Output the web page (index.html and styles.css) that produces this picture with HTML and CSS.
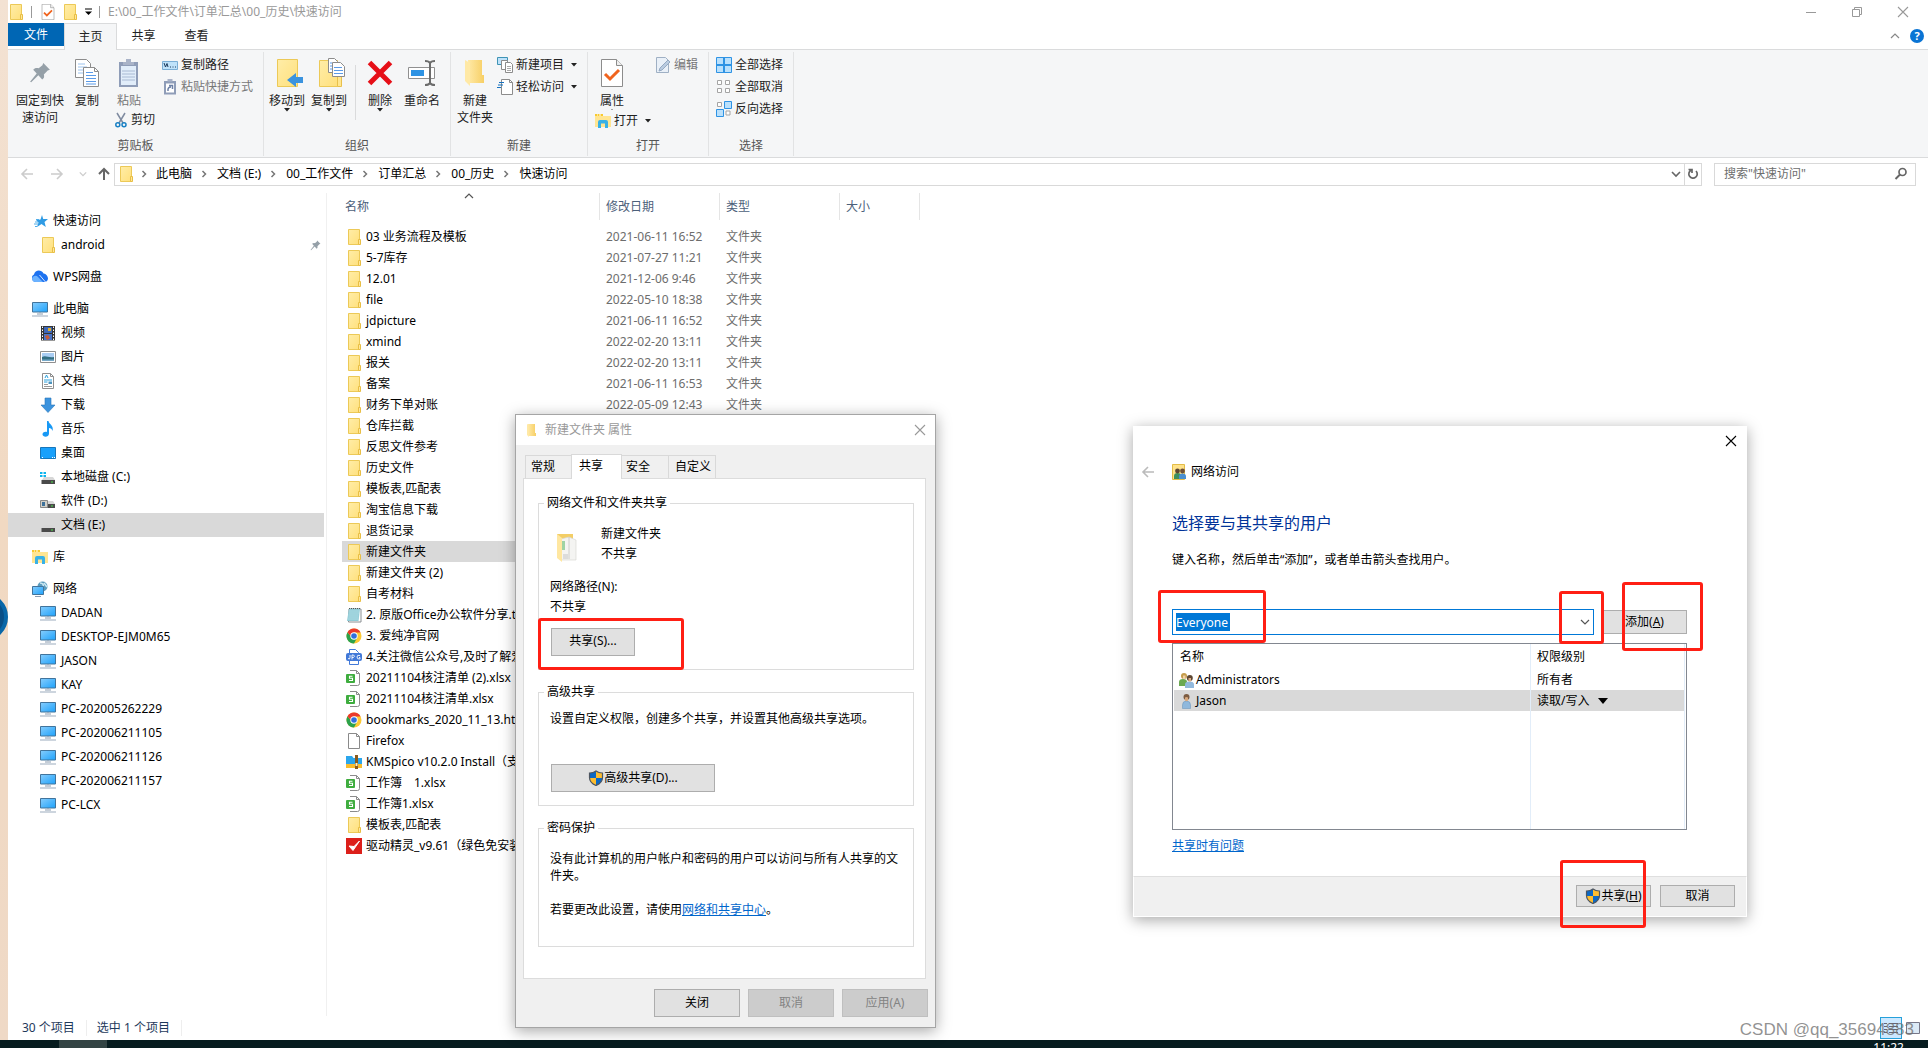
FILE: index.html
```html
<!DOCTYPE html>
<html lang="zh-CN">
<head>
<meta charset="utf-8">
<title>快速访问</title>
<link rel="stylesheet" href="styles.css">
</head>
<body>
<svg class="defs" aria-hidden="true">
  <defs>
    <linearGradient id="gf" x1="0" y1="0" x2="1" y2="1"><stop offset="0" stop-color="#ffeda8"/><stop offset="1" stop-color="#ffe07c"/></linearGradient>
    <linearGradient id="gs" x1="0" y1="0" x2="1" y2="1"><stop offset="0" stop-color="#86cdfd"/><stop offset="1" stop-color="#1ea2fb"/></linearGradient>
    <linearGradient id="gn" x1="0" y1="0" x2="1" y2="0"><stop offset="0" stop-color="#ffe9a6"/><stop offset="1" stop-color="#f7cf65"/></linearGradient>
    <clipPath id="shieldclip"><path d="M8 1C6 2.600 3.500 3 1.500 3v4.500C1.500 11.500 5 14.300 8 15.500c3-1.200 6.500-4 6.500-8V3C12.500 3 10 2.600 8 1z"/></clipPath>
  </defs>
  <symbol id="folder" viewBox="0 0 16 16"><path d="M2.500.5h11v15h-11z" fill="url(#gf)" stroke="#ecc957"/><path d="M12.500 10.500h2v5h-2z" fill="#ffe79a" stroke="#e8be45"/></symbol>
  <symbol id="smallfolder" viewBox="0 0 16 16"><path d="M4 2l2 1v12l-2-2z" fill="#ffe9a6"/><path d="M5 2h7v9h1v3H6z" fill="url(#gn)"/></symbol>
  <symbol id="pc" viewBox="0 0 16 16"><path d="M.5 1.500h15v9.500H.5z" fill="url(#gs)" stroke="#41749c"/><path d="M7 11.500h2V12H7zM5 12.500h6v1H5z" fill="#8a9cb0"/><path d="M0 14.500h16v1H0z" fill="#9aabbc"/></symbol>
  <symbol id="star" viewBox="0 0 16 16"><path d="M10 2l1.200 4L16 6l-3.500 3 1.300 5L9.500 11l-4.500 3 1.500-4.500L4 7l4.500-.6z" fill="#2f9be4"/><path d="M3 9h3M2 11h4M3 13.500h2M4 6.500h3" stroke="#4fadea"/></symbol>
  <symbol id="cloud" viewBox="0 0 16 16"><path d="M4 13a4 4 0 01-2-7.500C3 1 9 0 11.500 4.500 15 5 16 8 16 9.500 16 12 14 13 12.500 13z" fill="#1d72f0"/><path d="M0 9.500C1 6.500 4.500 6 6 8l5 5H4C1.500 13 0 12 0 9.500z" fill="#6bb2ff"/><path d="M7.500 6l6 7" stroke="#fff" stroke-width=".8"/></symbol>
  <symbol id="video" viewBox="0 0 16 16"><path d="M1 1h14v14.500H1z" fill="#333"/><path d="M4 2h8v6H4z" fill="#3d67b8"/><path d="M4 9h8v6H4z" fill="#4a74c8"/><path d="M8 3h3v3H8z" fill="#e0b030"/><path d="M5 11l3-1 2 3-3 2z" fill="#c85b34"/><path d="M2.500 1.500v14M13.500 1.500v14" stroke="#fff" stroke-dasharray="1.500 1.500"/></symbol>
  <symbol id="image" viewBox="0 0 16 16"><path d="M.5 2.500h15v11H.5z" fill="#fff" stroke="#8f8f8f"/><path d="M2 4h12v8H2z" fill="#a9cdf3"/><path d="M2 8c4-2 6 1 12 0v4H2z" fill="#336f83"/><path d="M2 10.500h12V12H2z" fill="#77a9c8"/></symbol>
  <symbol id="doc" viewBox="0 0 16 16"><path d="M2.500.5h8l3 3v12h-11z" fill="#fff" stroke="#8f8f8f"/><path d="M10.500.5v3h3" fill="none" stroke="#8f8f8f"/><path d="M4 7h8M4 9h3.500" stroke="#29a0dd"/><path d="M5 5l1.500-3L8 5" fill="none" stroke="#29a0dd"/><path d="M8.500 8.500h3.500v2.500H8.500z" fill="#4c93bd"/><path d="M4 11.500h4M4 13.500h8" stroke="#999"/></symbol>
  <symbol id="down" viewBox="0 0 16 16"><path d="M5 1h6v7h4l-7 7.500L1 8h4z" fill="#3b93de" stroke="#2a77b9" stroke-width=".6"/></symbol>
  <symbol id="music" viewBox="0 0 16 16"><path d="M7 0h1.500c.5 3.500 5.500 4 4 10-.3-2-2-3-3.500-3v5.500C9 17 2 16.500 2.500 13 3 10.800 5.500 10.300 7 11z" fill="#1899f5"/></symbol>
  <symbol id="desk" viewBox="0 0 16 16"><path d="M.5 2.500h15v11H.5z" fill="#18a0fb" stroke="#1776ba"/><path d="M2 12.500h1M12 12.500h1M14 12.500h1" stroke="#fff"/></symbol>
  <symbol id="drive" viewBox="0 0 16 16"><path d="M4 8h9l2 3H2z" fill="#d7d7d7"/><path d="M1.500 11h13.500v4H1.500z" fill="#4a4a4a"/><path d="M11 13h2" stroke="#4ae04a"/></symbol>
  <symbol id="drivec" viewBox="0 0 16 16"><use href="#drive"/><path d="M0 3h2.500v2H0zM3.500 3h2.500v2H3.500zM0 6h2.500v2H0zM3.500 6h2.500v2H3.500z" fill="#0db4ee"/></symbol>
  <symbol id="drived" viewBox="0 0 16 16"><use href="#drive"/><path d="M.5 7.500h7v7h-7z" fill="#d3d0c8" stroke="#888"/><path d="M2 9h3v4H2z" fill="#3e719a"/></symbol>
  <symbol id="lib" viewBox="0 0 16 16"><path d="M0 1h8v2h8v11H0z" fill="#ffe592"/><path d="M0 1h8v2H0z" fill="#f8c92e"/><path d="M2 2h1M4 2h2" stroke="#fff"/><path d="M3 15V9q0-2 2-2h6q2 0 2 2v6h-3v-4.500H6V15z" fill="#38b1e6"/></symbol>
  <symbol id="net" viewBox="0 0 16 16"><circle cx="10.500" cy="5.500" r="5" fill="#5c9cbd"/><path d="M8 2c3 0 4 2 3 4M12 2l3 4" stroke="#cde8f3" stroke-width="1.500" fill="none"/><path d="M.5 5.500h11v8H.5z" fill="url(#gs)" stroke="#41749c"/><path d="M3 15.500h6" stroke="#8a9cb0"/></symbol>
  <symbol id="pin" viewBox="0 0 20 20"><path d="M13 1l6 6-2 .8-3.500 3.500c.6 2 .2 3.500-1.500 4.700L8.500 12 2 18.500 1 18l6-7.500L3.800 7c1.500-1.500 3.200-1.700 5-1.300L12.200 3z" fill="#95a0a8"/></symbol>
  <symbol id="note" viewBox="0 0 16 16"><path d="M3 2h12v13H2.500z" fill="#fff" stroke="#8a8f92"/><path d="M3 1.500h11L12.500 14H1z" fill="#8fcbd6"/><path d="M3 4h10M3 6h10M2.500 8h10M2.500 10h10M2 12h10" stroke="#c6e9ef" stroke-width=".6"/><path d="M3 1.500h11" stroke="#555" stroke-dasharray="1 1"/></symbol>
  <symbol id="chrome" viewBox="0 0 16 16"><circle cx="8" cy="8" r="7.500" fill="#fcc934"/><path d="M8 8L5 8.500 1.500 4.200A7.500 7.500 0 008 15.500L11 10z" fill="#2ba24c"/><path d="M1.500 4.200A7.500 7.500 0 0114.600 4.500H8L5 8.500z" fill="#ea3a2d"/><circle cx="8" cy="8" r="3.700" fill="#fff"/><circle cx="8" cy="8" r="2.800" fill="#2f6fde"/></symbol>
  <symbol id="jpg" viewBox="0 0 16 16"><path d="M3.500 4V.5h6l3 3V4M3.500 12v3.500h9V12" fill="#fff" stroke="#4279d8"/><rect x="0" y="4" width="16" height="8" rx="2" fill="#4279d8"/><path d="M2 9.500q2 1.500 2-1V6M6 10.500V6h1.500q2 1.200 0 2.500H6M14 6.500q-3-1-3 1.500t3 2V8.500h-1" fill="none" stroke="#fff" stroke-width=".9"/></symbol>
  <symbol id="xls" viewBox="0 0 16 16"><path d="M4 .5h6.500l3 3v10q0 2-2 2H4" fill="#fff" stroke="#8b8b8b"/><path d="M10.500.5v3h3" fill="none" stroke="#8b8b8b"/><rect x="0" y="4" width="9" height="9" rx="1" fill="#3ead3e"/><path d="M6.500 6.200h-3v2h3v2.300h-3.500" fill="none" stroke="#fff" stroke-width="1.100"/></symbol>
  <symbol id="blank" viewBox="0 0 16 16"><path d="M2.500.5h8l3 3v12h-11z" fill="#fff" stroke="#8a8a8a"/><path d="M10.500.5v3h3" fill="none" stroke="#8a8a8a"/></symbol>
  <symbol id="zip" viewBox="0 0 16 16"><path d="M0 2h6l1.500 2H16v9H0z" fill="#2ba6ec"/><path d="M0 10h16v4H0z" fill="#f9bd2e"/><path d="M9 1h3v14H9z" fill="#8a5a1c"/><path d="M9.500 9h2v3h-2z" fill="#fff2c0"/></symbol>
  <symbol id="drv" viewBox="0 0 16 16"><path d="M0 0h16v16H0z" fill="#dc1f1a"/><path d="M3 8l4 4.500L13.500 3 8 8.500z" fill="#fff" stroke="#fff"/></symbol>
  <symbol id="checkdoc" viewBox="0 0 22 28"><path d="M.5.500h15l6 6v21H.5z" fill="#fff" stroke="#8c8c8c"/><path d="M15.500.5v6h6" fill="#eee" stroke="#8c8c8c"/><path d="M4 15l5 5 9-9" fill="none" stroke="#f0641e" stroke-width="3"/></symbol>
  <symbol id="copy" viewBox="0 0 24 28"><path d="M.5.500h11l4 4v14H.5z" fill="#fff" stroke="#8c8c8c"/><path d="M3 5h7M3 8h9M3 11h9M3 14h9" stroke="#9cc3ee"/><path d="M8.500 8.500h11l4 4v15h-15z" fill="#fff" stroke="#8c8c8c"/><path d="M19.500 8.500v4h4" fill="none" stroke="#8c8c8c"/><path d="M11 13.500h7M11 16.500h10M11 19.500h10M11 22.500h10M11 25h10" stroke="#5b9be8"/></symbol>
  <symbol id="paste" viewBox="0 0 22 30"><path d="M1 4h19v25H1z" fill="#8f9db8"/><path d="M3 8h15v19H3z" fill="#e1edfa"/><path d="M4 13h13M4 16h13M4 19h13M4 22h13" stroke="#a9bad3"/><path d="M5 7V4h3V1h5v3h3v3z" fill="#a9b3c8"/></symbol>
  <symbol id="cut" viewBox="0 0 12 16"><path d="M2 1l6 10M10 1L4 11" stroke="#7f8ba0" stroke-width="1.500"/><circle cx="2.800" cy="12.800" r="2" fill="none" stroke="#1980c4" stroke-width="1.500"/><circle cx="9" cy="12.800" r="2" fill="none" stroke="#1980c4" stroke-width="1.500"/></symbol>
  <symbol id="path" viewBox="0 0 16 16"><path d="M.5 4.500h15v8H.5z" fill="#bfe2fa" stroke="#7baed6"/><path d="M2 6l1.500 4L5 6.500 6 10M8 10h1M10.500 10h1M13 10h1" stroke="#1d3b5c" fill="none"/></symbol>
  <symbol id="pastelink" viewBox="0 0 16 16"><path d="M2 2h12v13.500H2z" fill="#8f9db8"/><path d="M4 4.500h8v9H4z" fill="#fff"/><path d="M5.500 0h5v2.500h-5z" fill="#a9b3c8"/><path d="M6 12q-.5-4 3-4M7 6.500h3.500V10" stroke="#6d81a6" stroke-width="1.500" fill="none"/></symbol>
  <symbol id="move" viewBox="0 0 26 30"><path d="M.5 1.500h20v27H.5z" fill="url(#gf)" stroke="#ecc957"/><path d="M26 19h-7v-4l-9 7 9 7v-4h7z" fill="#3b93de"/></symbol>
  <symbol id="copyto" viewBox="0 0 26 30"><path d="M.5 2.500h18v26H.5z" fill="url(#gf)" stroke="#ecc957"/><path d="M18.500 18.500h4v10h-4z" fill="#ffe690" stroke="#e8c04c"/><path d="M9.500.500h6l3 3v11h-9z" fill="#fff" stroke="#8c8c8c"/><path d="M13.500 4.500h8l4 4v10h-12z" fill="#fff" stroke="#8c8c8c"/><path d="M15 9.500h8M15 12.500h9M15 15.500h9M11 5h2M11 8h2M11 11h2" stroke="#5b9be8"/></symbol>
  <symbol id="del" viewBox="0 0 26 26"><path d="M2.500 2.500l21 21M23.500 2.500l-21 21" stroke="#e60f17" stroke-width="5"/></symbol>
  <symbol id="ren" viewBox="0 0 28 26"><path d="M.5 7.500h26v11H.5z" fill="#fff" stroke="#909090"/><path d="M3 10h13v6H3z" fill="#2e93e4"/><path d="M17 1q4 0 5 2 1-2 5-2M22 2v22M17 25q4 0 5-2 1 2 5 2" fill="none" stroke="#6c6c6c" stroke-width="2"/></symbol>
  <symbol id="newf" viewBox="0 0 20 28"><path d="M3 1h14v15h2v8H4z" fill="url(#gn)"/><path d="M0 1l5 3v23l-5-5z" fill="#ffe9a6"/></symbol>
  <symbol id="newitem" viewBox="0 0 16 16"><path d="M.5.500h10v7H.5z" fill="#bfe2fa" stroke="#3f94b5"/><path d="M4.500 3.500h6v9h-6z" fill="#fff" stroke="#8c8c8c"/><path d="M8.500 5.500h5l2 2v8h-7z" fill="#fff" stroke="#8c8c8c"/><path d="M10 9.500h4M10 11.500h4M10 13.500h4" stroke="#aaa"/></symbol>
  <symbol id="easy" viewBox="0 0 16 16"><path d="M4.500.500h8l3 3v12h-11z" fill="#fff" stroke="#8c8c8c"/><path d="M12.500.5v3h3" fill="none" stroke="#8c8c8c"/><path d="M2 3.500h5M1 6h5M0 8.500h4" stroke="#1772c0" stroke-width="1.200"/></symbol>
  <symbol id="edit" viewBox="0 0 16 16"><path d="M1.500.500h9l3 3v12h-12z" fill="#e9f0f8" stroke="#9fb0c4"/><path d="M4 14l1-3 8-8 2 2-8 8z" fill="#b9cbe0" stroke="#94a9c2"/></symbol>
  <symbol id="selall" viewBox="0 0 16 16"><path d="M.5.500h15v15H.5z" fill="#b9e0fc" stroke="#2e93e4"/><path d="M8 0v16M0 8h16" stroke="#2e93e4" stroke-width="2"/></symbol>
  <symbol id="selnone" viewBox="0 0 16 16"><path d="M1.500 1.500h4v4h-4zM9.500 1.500h4v4h-4zM1.500 9.500h4v4h-4zM9.500 9.500h4v4h-4z" fill="#fff" stroke="#a4a4a4"/></symbol>
  <symbol id="selinv" viewBox="0 0 16 16"><path d="M1.500 1.500h4v4h-4zM10 10h4v4h-4z" fill="#fff" stroke="#a4a4a4"/><path d="M8.500.500h7v7h-7zM.5 8.500h7v7h-7z" fill="#b9e0fc" stroke="#2e93e4"/></symbol>
  <symbol id="shield" viewBox="0 0 16 16"><g clip-path="url(#shieldclip)"><path d="M0 0h8v8H0z" fill="#0c68c4"/><path d="M8 0h8v8H8z" fill="#fdbd2f"/><path d="M0 8h8v8H0z" fill="#fdbd2f"/><path d="M8 8h8v8H8z" fill="#0c68c4"/></g><path d="M8 1C6 2.600 3.500 3 1.500 3v4.500C1.500 11.500 5 14.300 8 15.500c3-1.200 6.500-4 6.500-8V3C12.500 3 10 2.600 8 1z" fill="none" stroke="#4d5560" stroke-width="1.200"/></symbol>
  <symbol id="docfolder" viewBox="0 0 22 30"><path d="M1 2h16v22H1z" fill="#f3ce66"/><path d="M5 7l8-2 7 3v20H5z" fill="#f4f4f2" stroke="#d8d8d4" stroke-width=".7"/><path d="M13 5v22" stroke="#c4c4c0" stroke-width=".8"/><path d="M6 9h3v9H6z" fill="#9fd3a4"/><path d="M7 22h5v5H7z" fill="#dcdcdc"/><path d="M1 2l5 4v24l-5-4z" fill="#ffe7a1"/></symbol>
  <symbol id="person" viewBox="0 0 16 16"><path d="M3.500 15.500V12q0-4 4-4t4 4v3.500z" fill="#8fb8dc" stroke="#6f98bd" stroke-width=".6"/><circle cx="7.500" cy="4" r="3" fill="#7d5c42"/><path d="M6 4.500q1.500-1 3 0V7.500q-1.500 1.500-3 0z" fill="#d9a97d"/></symbol>
  <symbol id="people" viewBox="0 0 16 16"><path d="M0 14V10q0-3 4-3t4 3v4z" fill="#6ca952"/><circle cx="5" cy="4" r="3" fill="#c49c4b"/><path d="M4 3.500h2.500V7H4z" fill="#f0cfa6"/><path d="M6 16v-3.500q0-3 4.500-3t4.500 3V16z" fill="#92b9dd"/><circle cx="10.800" cy="6" r="3" fill="#5d4632"/><path d="M9.500 6H12v3.500H9.500z" fill="#dcab82"/></symbol>
  <symbol id="share" viewBox="0 0 16 16"><path d="M.5.500h12v15H.5z" fill="#ffe28a" stroke="#e3bc46"/><path d="M2 15v-3q0-3 3.500-3T9 12v3z" fill="#3f8f5c"/><circle cx="5.500" cy="7" r="2.400" fill="#5d4632"/><path d="M7 15v-2.500q0-3 3.500-3t3.500 3V15z" fill="#4a8fd0"/><circle cx="10.500" cy="7" r="2.400" fill="#6d4f38"/></symbol>
  <symbol id="left" viewBox="0 0 14 14"><path d="M13 7H2M7 2L2 7l5 5" fill="none" stroke="currentColor" stroke-width="1.600"/></symbol>
  <symbol id="right" viewBox="0 0 14 14"><path d="M1 7h11M7 2l5 5-5 5" fill="none" stroke="currentColor" stroke-width="1.600"/></symbol>
  <symbol id="up" viewBox="0 0 14 14"><path d="M7 13V2M2 7l5-5 5 5" fill="none" stroke="currentColor" stroke-width="2"/></symbol>
  <symbol id="chev" viewBox="0 0 10 10"><path d="M1 3l4 4 4-4" fill="none" stroke="currentColor" stroke-width="1.600"/></symbol>
  <symbol id="chevup" viewBox="0 0 10 10"><path d="M1 7l4-4 4 4" fill="none" stroke="currentColor" stroke-width="1.200"/></symbol>
  <symbol id="sep" viewBox="0 0 8 8"><path d="M2.500 1l3 3-3 3" fill="none" stroke="#777" stroke-width="1.500"/></symbol>
  <symbol id="tri" viewBox="0 0 8 4"><path d="M1 0h6L4 3.500z" fill="#222"/></symbol>
  <symbol id="close" viewBox="0 0 12 12"><path d="M1 1l10 10M11 1L1 11" stroke="currentColor" stroke-width="1.100"/></symbol>
</svg>

<div class="desktop">
  <span class="side-widget"></span>
  <main class="explorer">
    <header class="titlebar">
      <svg class="i16"><use href="#folder"/></svg><i class="bar"></i>
      <button class="plain" aria-label="属性"><svg class="i16"><use href="#checkdoc"/></svg></button>
      <button class="plain" aria-label="新建文件夹"><svg class="i16"><use href="#folder"/></svg></button>
      <button class="plain custom" aria-label="自定义"><svg width="8" height="8" viewBox="0 0 8 8"><path d="M1 1h7" stroke="#000"/><path d="M1 3.500h7L4.500 7z"/></svg></button><i class="bar"></i>
      <span class="title">E:\00_工作文件\订单汇总\00_历史\快速访问</span>
      <span class="win-buttons">
        <button aria-label="最小化"><svg width="12" height="12"><path d="M1 6.500h10" stroke="#999"/></svg></button>
        <button aria-label="还原"><svg width="12" height="12"><path d="M1.500 3.500h7v7h-7zM3.500 3V1.500h7v7H9" fill="none" stroke="#999"/></svg></button>
        <button aria-label="关闭"><svg width="12" height="12"><use href="#close"/></svg></button>
      </span>
    </header>

    <nav class="tabs">
      <button class="file">文件</button><button class="tab on">主页</button><button class="tab">共享</button><button class="tab">查看</button>
      <span class="tab-tools"><svg width="10" height="10"><use href="#chevup"/></svg><b class="help">?</b></span>
    </nav>

    <section class="ribbon">
      <div class="group g1">
        <div class="tools">
          <button class="big wide"><svg width="22" height="22"><use href="#pin"/></svg><span>固定到快<br>速访问</span></button>
          <button class="big"><svg width="24" height="28"><use href="#copy"/></svg><span>复制</span></button>
          <div class="col third">
            <button class="big dim"><svg width="22" height="30"><use href="#paste"/></svg><span>粘贴</span></button>
            <button class="small"><svg width="12" height="16"><use href="#cut"/></svg>剪切</button>
          </div>
          <div class="col">
            <button class="small"><svg class="i16"><use href="#path"/></svg>复制路径</button>
            <button class="small dim"><svg class="i16"><use href="#pastelink"/></svg>粘贴快捷方式</button>
          </div>
        </div>
        <div class="label">剪贴板</div>
      </div>
      <div class="group g2">
        <div class="tools">
          <button class="big to"><svg width="26" height="30"><use href="#move"/></svg><span>移动到</span><svg class="tri"><use href="#tri"/></svg></button>
          <button class="big to"><svg width="26" height="30"><use href="#copyto"/></svg><span>复制到</span><svg class="tri"><use href="#tri"/></svg></button>
          <i class="split"></i>
          <button class="big"><svg width="26" height="26"><use href="#del"/></svg><span>删除</span><svg class="tri"><use href="#tri"/></svg></button>
          <button class="big"><svg width="28" height="26"><use href="#ren"/></svg><span>重命名</span></button>
        </div>
        <div class="label">组织</div>
      </div>
      <div class="group g3">
        <div class="tools">
          <button class="big"><svg width="20" height="28"><use href="#newf"/></svg><span>新建<br>文件夹</span></button>
          <div class="col">
            <button class="small"><svg class="i16"><use href="#newitem"/></svg>新建项目<svg class="tri"><use href="#tri"/></svg></button>
            <button class="small"><svg class="i16"><use href="#easy"/></svg>轻松访问<svg class="tri"><use href="#tri"/></svg></button>
          </div>
        </div>
        <div class="label">新建</div>
      </div>
      <div class="group g4">
        <div class="tools">
          <div class="col props">
            <button class="big"><svg width="22" height="28"><use href="#checkdoc"/></svg><span>属性</span><svg class="tri cut"><use href="#tri"/></svg></button>
            <button class="small"><svg class="i16"><use href="#lib"/></svg>打开<svg class="tri"><use href="#tri"/></svg></button>
          </div>
          <div class="col"><button class="small dim"><svg class="i16"><use href="#edit"/></svg>编辑</button></div>
        </div>
        <div class="label">打开</div>
      </div>
      <div class="group g5">
        <div class="tools">
          <div class="col">
            <button class="small"><svg class="i16"><use href="#selall"/></svg>全部选择</button>
            <button class="small"><svg class="i16"><use href="#selnone"/></svg>全部取消</button>
            <button class="small"><svg class="i16"><use href="#selinv"/></svg>反向选择</button>
          </div>
        </div>
        <div class="label">选择</div>
      </div>
    </section>

    <section class="address">
      <button class="nav off" aria-label="后退"><svg width="14" height="14"><use href="#left"/></svg></button>
      <button class="nav off" aria-label="前进"><svg width="14" height="14"><use href="#right"/></svg></button>
      <button class="nav off narrow" aria-label="历史"><svg width="8" height="8"><use href="#chev"/></svg></button>
      <button class="nav parent" aria-label="上移"><svg width="14" height="14"><use href="#up"/></svg></button>
      <div class="crumbs">
        <svg class="i16"><use href="#folder"/></svg>
        <svg class="sep"><use href="#sep"/></svg><a href="#">此电脑</a>
        <svg class="sep"><use href="#sep"/></svg><a href="#">文档 (E:)</a>
        <svg class="sep"><use href="#sep"/></svg><a href="#">00_工作文件</a>
        <svg class="sep"><use href="#sep"/></svg><a href="#">订单汇总</a>
        <svg class="sep"><use href="#sep"/></svg><a href="#">00_历史</a>
        <svg class="sep"><use href="#sep"/></svg><a href="#">快速访问</a>
        <button class="plain drop" aria-label="展开"><svg width="10" height="10"><use href="#chev"/></svg></button>
        <button class="plain refresh" aria-label="刷新"><svg width="12" height="14" viewBox="0 0 12 14"><path d="M4 3.300A4.200 4.200 0 109 4M1.500 2.500H5V6" fill="none" stroke="#666" stroke-width="1.700"/></svg></button>
      </div>
      <label class="search"><input type="text" placeholder='搜索"快速访问"' aria-label="搜索"><svg width="14" height="14"><circle cx="8.500" cy="5" r="3.500" fill="none" stroke="#666" stroke-width="1.700"/><path d="M6 7.500L1.500 12" stroke="#666" stroke-width="2"/></svg></label>
    </section>

    <div class="content">
      <nav class="tree">
        <ul>
          <li class="root"><svg class="i16"><use href="#star"/></svg>快速访问</li>
          <li><svg class="i16"><use href="#folder"/></svg>android<svg class="pinned"><use href="#pin"/></svg></li>
        </ul>
        <ul><li class="root"><svg class="i16"><use href="#cloud"/></svg>WPS网盘</li></ul>
        <ul>
          <li class="root"><svg class="i16"><use href="#pc"/></svg>此电脑</li>
          <li><svg class="i16"><use href="#video"/></svg>视频</li>
          <li><svg class="i16"><use href="#image"/></svg>图片</li>
          <li><svg class="i16"><use href="#doc"/></svg>文档</li>
          <li><svg class="i16"><use href="#down"/></svg>下载</li>
          <li><svg class="i16"><use href="#music"/></svg>音乐</li>
          <li><svg class="i16"><use href="#desk"/></svg>桌面</li>
          <li><svg class="i16"><use href="#drivec"/></svg>本地磁盘 (C:)</li>
          <li><svg class="i16"><use href="#drived"/></svg>软件 (D:)</li>
          <li class="sel"><svg class="i16"><use href="#drive"/></svg>文档 (E:)</li>
        </ul>
        <ul><li class="root"><svg class="i16"><use href="#lib"/></svg>库</li></ul>
        <ul>
          <li class="root"><svg class="i16"><use href="#net"/></svg>网络</li>
          <li><svg class="i16"><use href="#pc"/></svg>DADAN</li>
          <li><svg class="i16"><use href="#pc"/></svg>DESKTOP-EJM0M65</li>
          <li><svg class="i16"><use href="#pc"/></svg>JASON</li>
          <li><svg class="i16"><use href="#pc"/></svg>KAY</li>
          <li><svg class="i16"><use href="#pc"/></svg>PC-202005262229</li>
          <li><svg class="i16"><use href="#pc"/></svg>PC-202006211105</li>
          <li><svg class="i16"><use href="#pc"/></svg>PC-202006211126</li>
          <li><svg class="i16"><use href="#pc"/></svg>PC-202006211157</li>
          <li><svg class="i16"><use href="#pc"/></svg>PC-LCX</li>
        </ul>
      </nav>
      <div class="files">
        <table>
          <colgroup><col class="c-name"><col class="c-date"><col class="c-type"><col class="c-size"></colgroup>
          <thead><tr><th>名称<svg class="sort"><use href="#chevup"/></svg></th><th>修改日期</th><th>类型</th><th>大小</th></tr></thead>
          <tbody>
            <tr><td><svg class="i16"><use href="#folder"/></svg>03 业务流程及模板</td><td>2021-06-11 16:52</td><td>文件夹</td><td></td></tr>
            <tr><td><svg class="i16"><use href="#folder"/></svg>5-7库存</td><td>2021-07-27 11:21</td><td>文件夹</td><td></td></tr>
            <tr><td><svg class="i16"><use href="#folder"/></svg>12.01</td><td>2021-12-06 9:46</td><td>文件夹</td><td></td></tr>
            <tr><td><svg class="i16"><use href="#folder"/></svg>file</td><td>2022-05-10 18:38</td><td>文件夹</td><td></td></tr>
            <tr><td><svg class="i16"><use href="#folder"/></svg>jdpicture</td><td>2021-06-11 16:52</td><td>文件夹</td><td></td></tr>
            <tr><td><svg class="i16"><use href="#folder"/></svg>xmind</td><td>2022-02-20 13:11</td><td>文件夹</td><td></td></tr>
            <tr><td><svg class="i16"><use href="#folder"/></svg>报关</td><td>2022-02-20 13:11</td><td>文件夹</td><td></td></tr>
            <tr><td><svg class="i16"><use href="#folder"/></svg>备案</td><td>2021-06-11 16:53</td><td>文件夹</td><td></td></tr>
            <tr><td><svg class="i16"><use href="#folder"/></svg>财务下单对账</td><td>2022-05-09 12:43</td><td>文件夹</td><td></td></tr>
            <tr><td><svg class="i16"><use href="#folder"/></svg>仓库拦截</td><td></td><td></td><td></td></tr>
            <tr><td><svg class="i16"><use href="#folder"/></svg>反思文件参考</td><td></td><td></td><td></td></tr>
            <tr><td><svg class="i16"><use href="#folder"/></svg>历史文件</td><td></td><td></td><td></td></tr>
            <tr><td><svg class="i16"><use href="#folder"/></svg>模板表,匹配表</td><td></td><td></td><td></td></tr>
            <tr><td><svg class="i16"><use href="#folder"/></svg>淘宝信息下载</td><td></td><td></td><td></td></tr>
            <tr><td><svg class="i16"><use href="#folder"/></svg>退货记录</td><td></td><td></td><td></td></tr>
            <tr class="sel"><td><svg class="i16"><use href="#folder"/></svg>新建文件夹</td><td></td><td></td><td></td></tr>
            <tr><td><svg class="i16"><use href="#folder"/></svg>新建文件夹 (2)</td><td></td><td></td><td></td></tr>
            <tr><td><svg class="i16"><use href="#folder"/></svg>自考材料</td><td></td><td></td><td></td></tr>
            <tr><td><svg class="i16"><use href="#note"/></svg>2. 原版Office办公软件分享.txt</td><td></td><td></td><td></td></tr>
            <tr><td><svg class="i16"><use href="#chrome"/></svg>3. 爱纯净官网</td><td></td><td></td><td></td></tr>
            <tr><td><svg class="i16"><use href="#jpg"/></svg>4.关注微信公众号,及时了解爱</td><td></td><td></td><td></td></tr>
            <tr><td><svg class="i16"><use href="#xls"/></svg>20211104核注清单 (2).xlsx</td><td></td><td></td><td></td></tr>
            <tr><td><svg class="i16"><use href="#xls"/></svg>20211104核注清单.xlsx</td><td></td><td></td><td></td></tr>
            <tr><td><svg class="i16"><use href="#chrome"/></svg>bookmarks_2020_11_13.html</td><td></td><td></td><td></td></tr>
            <tr><td><svg class="i16"><use href="#blank"/></svg>Firefox</td><td></td><td></td><td></td></tr>
            <tr><td><svg class="i16"><use href="#zip"/></svg>KMSpico v10.2.0 Install（支</td><td></td><td></td><td></td></tr>
            <tr><td><svg class="i16"><use href="#xls"/></svg>工作簿　1.xlsx</td><td></td><td></td><td></td></tr>
            <tr><td><svg class="i16"><use href="#xls"/></svg>工作簿1.xlsx</td><td></td><td></td><td></td></tr>
            <tr><td><svg class="i16"><use href="#folder"/></svg>模板表,匹配表</td><td></td><td></td><td></td></tr>
            <tr><td><svg class="i16"><use href="#drv"/></svg>驱动精灵_v9.61（绿色免安装</td><td></td><td></td><td></td></tr>
          </tbody>
        </table>
      </div>
    </div>

    <footer class="status">
      <span>30 个项目</span><span>选中 1 个项目</span>
      <span class="views">
        <button class="view on" aria-label="详细信息"><svg width="14" height="12"><path d="M0 1.500h3M5 1.500h9M0 4.500h3M5 4.500h9M0 7.500h3M5 7.500h9M0 10.500h3M5 10.500h9" stroke="#667"/></svg></button>
        <button class="view" aria-label="大图标"><svg width="14" height="12"><path d="M.5.500h13v11H.5z" fill="#dceaf6" stroke="#778"/></svg></button>
      </span>
    </footer>
  </main>
  <footer class="taskbar"><i></i><time>11:22</time></footer>

  <section class="dialog props-dialog">
    <header><svg class="i16"><use href="#smallfolder"/></svg><span>新建文件夹 属性</span><button class="plain" aria-label="关闭"><svg width="12" height="12"><use href="#close"/></svg></button></header>
    <div class="ptabs"><button>常规</button><button class="on">共享</button><button>安全</button><button>自定义</button></div>
    <div class="panel">
      <fieldset class="f1">
        <legend>网络文件和文件夹共享</legend>
        <div class="media"><svg width="22" height="30"><use href="#docfolder"/></svg><div><p>新建文件夹</p><p>不共享</p></div></div>
        <p>网络路径(N):</p><p>不共享</p>
        <button class="btn">共享(S)...</button>
      </fieldset>
      <fieldset class="f2">
        <legend>高级共享</legend>
        <p>设置自定义权限，创建多个共享，并设置其他高级共享选项。</p>
        <button class="btn"><svg class="i16"><use href="#shield"/></svg>高级共享(D)...</button>
      </fieldset>
      <fieldset class="f3">
        <legend>密码保护</legend>
        <p>没有此计算机的用户帐户和密码的用户可以访问与所有人共享的文件夹。</p>
        <p>若要更改此设置，请使用<a href="#">网络和共享中心</a>。</p>
      </fieldset>
    </div>
    <div class="actions"><button class="btn">关闭</button><button class="btn" disabled>取消</button><button class="btn" disabled>应用(A)</button></div>
    <span class="mark m-share"></span>
  </section>

  <section class="dialog share-dialog">
    <div class="topline"><button class="plain" aria-label="关闭"><svg width="12" height="12"><use href="#close"/></svg></button></div>
    <header><button class="plain back" aria-label="返回"><svg width="14" height="14"><use href="#left"/></svg></button><svg class="i16"><use href="#share"/></svg><span>网络访问</span></header>
    <div class="body">
      <h1>选择要与其共享的用户</h1>
      <label for="user">键入名称，然后单击“添加”，或者单击箭头查找用户。</label>
      <div class="pick">
        <div class="combo"><input id="user" type="text" value="Everyone"><button class="plain" aria-label="展开"><svg width="10" height="10" viewBox="0 0 10 10"><path d="M1 3l4 4 4-4" fill="none" stroke="#555" stroke-width="1.200"/></svg></button></div>
        <button class="btn">添加(<u>A</u>)</button>
      </div>
      <div class="list">
        <table>
          <thead><tr><th>名称</th><th>权限级别</th></tr></thead>
          <tbody>
            <tr><td><svg class="i16"><use href="#people"/></svg>Administrators</td><td>所有者</td></tr>
            <tr class="sel"><td><svg class="i16"><use href="#person"/></svg>Jason</td><td><button class="plain level">读取/写入<svg width="10" height="6" viewBox="0 0 10 6"><path d="M0 0h10L5 6z"/></svg></button></td></tr>
            <tr class="rest"><td></td><td></td></tr>
          </tbody>
        </table>
      </div>
      <a href="#">共享时有问题</a>
    </div>
    <footer><button class="btn"><svg class="i16"><use href="#shield"/></svg>共享(<u>H</u>)</button><button class="btn">取消</button></footer>
    <span class="mark m-user"></span><span class="mark m-drop"></span><span class="mark m-add"></span><span class="mark m-ok"></span>
  </section>

  <span class="watermark">CSDN @qq_35694883</span>
</div>
</body>
</html>
```
FILE: styles.css
```css
* { box-sizing: border-box; }
body { margin: 0; font: 12px/16px "Noto Sans", "Noto Sans CJK SC", sans-serif; color: #000; }
button, input { font: inherit; color: inherit; margin: 0; padding: 0; border: 0; background: none; }
button { display: flex; align-items: center; white-space: nowrap; }
svg { flex: none; display: block; overflow: visible; }
p, h1, ul, fieldset, legend { margin: 0; padding: 0; }
ul { list-style: none; }
a { color: #0066cc; }
.defs { position: absolute; width: 0; height: 0; overflow: hidden; }
.i16 { width: 16px; height: 16px; }
.tri { width: 8px; height: 4px; }

.desktop { position: relative; min-height: 100vh; display: flex; flex-direction: column; overflow: hidden; background: linear-gradient(#f3e2d3, #f1d9c2 50%, #efd9c6); }
.side-widget { position: absolute; left: -40px; top: 593px; width: 48px; height: 48px; border-radius: 50%; background: #0a4f86; border: 4px solid #0967a8; }
.explorer { flex: 1; margin-left: 8px; background: #fff; display: flex; flex-direction: column; }

/* title bar */
.titlebar { height: 23px; display: flex; align-items: center; }
.titlebar .bar { width: 1px; height: 12px; background: #999; margin: 0 8px 0 7px; }
.titlebar button.plain { margin-right: 6px; }
.titlebar button.custom { margin: 0; }
.title { color: #999; }
.win-buttons { margin-left: auto; display: flex; padding-right: 2px; color: #999; }
.win-buttons button { width: 46px; height: 20px; justify-content: center; }

/* tabs */
.tabs { display: flex; height: 27px; border-bottom: 1px solid #dadbdc; }
.tabs button { justify-content: center; }
.file { width: 56px; height: 23px; background: #0066b4; color: #fff; }
.tabs .tab { width: 53px; height: 26px; color: #222; }
.tabs .on { height: 27px; border: 1px solid #dadbdc; border-bottom: 0; background: #f5f6f7; }
.tab-tools { margin-left: auto; display: flex; align-items: center; gap: 10px; padding-right: 4px; color: #888; }
.help { width: 14px; height: 14px; border-radius: 50%; background: #0a74d4; color: #fff; font-size: 11px; line-height: 14px; text-align: center; }

/* ribbon */
.ribbon { display: flex; background: #f5f6f7; border-bottom: 1px solid #dadbdc; padding: 2px 0 1px; color: #222; }
.group { border-right: 1px solid #e2e3e4; padding: 2px 2px 0; display: flex; flex-direction: column; }
.g1 { width: 256px; padding: 2px 6px 0; }
.g2 { width: 187px; }
.g3 { width: 137px; }
.g4 { width: 121px; }
.g5 { width: 85px; padding: 2px 7px 0; }
.tools { display: flex; align-items: flex-start; height: 84px; }
.label { text-align: center; color: #555; height: 18px; }
.big { display: grid; grid-template-rows: 30px auto auto; justify-items: center; align-items: center; width: 42px; padding-top: 4px; line-height: 17px; }
.big > span { margin-top: 4px; text-align: center; }
.big > svg.tri { margin-top: -1px; }
.big > svg.cut { height: 1px; overflow: hidden; margin-top: 0; }
.to > svg:first-child { margin-left: 6px; }
.wide { width: 52px; }
.g3 .big, .g4 .big { width: 44px; }
.split { width: 1px; height: 55px; margin: 11px 3px 0 5px; background: #dadbdc; }
.col { display: flex; flex-direction: column; align-items: flex-start; }
.third { width: 54px; }
.third .small { padding-left: 7px; gap: 4px; }
.small { height: 22px; gap: 3px; }
.small .tri { margin-left: 3px; }
.props { width: 65px; }
.props .small { padding-left: 5px; }
.dim { color: #777; }

/* address bar */
.address { display: flex; align-items: center; height: 35px; padding: 0 12px 3px 4px; color: #666; }
.nav { width: 30px; height: 22px; justify-content: center; }
.nav.narrow { width: 22px; }
.nav.off { color: #ccc; }
.nav.parent { width: 20px; }
.crumbs { flex: 1; display: flex; align-items: center; height: 23px; border: 1px solid #d9d9d9; padding-left: 3px; }
.crumbs a { color: #000; text-decoration: none; }
.crumbs .sep { width: 8px; height: 8px; margin: 0 9px 0 8px; }
.crumbs .i16 + .sep { margin: 0 8px 0 6px; }
.crumbs .drop { margin-left: auto; width: 13px; }
.crumbs .refresh { width: 17px; height: 21px; border-left: 1px solid #d9d9d9; justify-content: center; }
.search { width: 202px; height: 23px; margin-left: 12px; border: 1px solid #d9d9d9; display: flex; align-items: center; padding: 0 7px 0 9px; }
.search input { flex: 1; min-width: 0; outline: 0; }
.search input::placeholder { color: #6d6d6d; opacity: 1; }

/* content */
.content { flex: 1; display: flex; }
.tree { width: 319px; border-right: 1px solid #f0f0f0; padding-top: 16px; }
.tree ul { margin-bottom: 8px; }
.tree li { display: flex; align-items: center; height: 24px; gap: 5px; padding: 0 3px 0 32px; margin-right: 2px; }
.tree .root { padding-left: 24px; }
.tree .sel, tr.sel { background: #d9d9d9; }
.pinned { width: 11px; height: 11px; margin-left: auto; }
.files { flex: 1; padding-left: 15px; }
table { border-spacing: 0; table-layout: fixed; }
th { font-weight: 400; text-align: left; }
.files table { width: 578px; }
.c-name { width: 258px; }
.c-date, .c-type { width: 120px; }
.c-size { width: 80px; }
.files th { position: relative; height: 27px; padding: 0 0 0 6px; border-right: 1px solid #e5e5e5; color: #4c607a; }
.files th:first-child { padding-left: 3px; }
.sort { position: absolute; top: -2px; left: 122px; width: 10px; height: 10px; color: #555; }
.files tbody::before { content: ""; display: block; height: 6px; }
.files td { height: 21px; padding: 0 0 0 6px; white-space: nowrap; color: #6d6d6d; overflow: hidden; }
.files td:first-child { padding-left: 4px; color: #000; }
.files td .i16 { display: inline-block; vertical-align: top; margin-right: 4px; }

/* status and task bar */
.status { display: flex; align-items: center; height: 24px; padding-left: 14px; color: #1e395b; }
.status > span { padding-right: 11px; }
.status > span + span { padding-left: 10px; border-left: 1px solid #eee; }
.status > span:nth-child(2) { border-right: 1px solid #eee; }
.status > .views { margin-left: auto; display: flex; border: 0; padding: 0 4px 0 0; }
.view { width: 22px; height: 22px; justify-content: center; }
.view.on { background: #cce8ff; border: 1px solid #26a0da; }
.taskbar { height: 8px; background: #071c1f; display: flex; overflow: hidden; color: #fff; }
.taskbar i { width: 48px; margin-left: 59px; background: #334444; }
.taskbar time { margin-left: auto; padding-right: 24px; }

/* dialogs */
.dialog { position: absolute; box-shadow: 0 3px 14px rgba(0, 0, 0, .35); }
.btn { justify-content: center; height: 28px; background: #e1e1e1; border: 1px solid #adadad; }
.btn:disabled { background: #ccc; border-color: #bfbfbf; color: #838383; }
.mark { position: absolute; border: 3px solid #ff1f14; border-radius: 3px; }

.props-dialog { left: 515px; top: 414px; width: 421px; background: #f0f0f0; border: 1px solid #a5a5a5; padding: 0 7px 10px; }
.props-dialog header { display: flex; align-items: center; height: 30px; margin: 0 -7px; padding: 0 9px 0 7px; background: #fff; color: #999; }
.props-dialog header span { flex: 1; padding-left: 6px; }
.ptabs { display: flex; align-items: flex-end; height: 33px; padding-left: 2px; }
.ptabs button { width: 46px; height: 23px; padding-left: 5px; border: 1px solid #d9d9d9; border-width: 1px 0 0 1px; }
.ptabs .on { width: 51px; height: 25px; padding: 0 0 3px 7px; margin-bottom: -1px; background: #fff; border-right-width: 1px; position: relative; }
.ptabs .on + button { border-left: 0; padding-left: 4px; }
.ptabs button:last-child { border-right-width: 1px; padding-left: 6px; width: 48px; }
.panel { background: #fff; border: 1px solid #dcdcdc; margin-right: 2px; padding: 16px 11px 31px 14px; display: flex; flex-direction: column; gap: 14px; }
fieldset { border: 1px solid #dcdcdc; padding: 0 5px; min-width: 0; }
legend { padding: 0 3px; }
fieldset > :not(legend) { margin-left: 6px; }
fieldset p { line-height: 20px; }
.media { display: flex; align-items: center; gap: 23px; padding: 13px 0 13px 6px; }
.media svg { margin-top: 6px; }
fieldset > .btn { margin-left: 7px; }
.f1 { padding-bottom: 13px; }
.f1 .btn { width: 84px; margin-top: 11px; padding-bottom: 2px; }
.f2 { padding: 9px 5px 13px; }
.f2 .btn { width: 164px; margin-top: 35px; }
.f3 { padding: 14px 5px 28px; }
.f3 p { line-height: 17px; }
.f3 p + p { margin-top: 17px; }
.actions { display: flex; justify-content: flex-end; gap: 8px; padding-top: 10px; }
.actions .btn { width: 86px; }
.m-share { left: 22px; top: 203px; width: 146px; height: 52px; }

.share-dialog { left: 1133px; top: 426px; width: 614px; background: #fff; }
.topline { display: flex; justify-content: flex-end; height: 30px; padding-right: 10px; }
.share-dialog header { display: flex; align-items: center; height: 32px; padding-left: 8px; }
.share-dialog header span { padding-left: 3px; }
.back { width: 31px; color: #bbb; }
.body { padding: 23px 60px 21px 39px; display: flex; flex-direction: column; align-items: flex-start; }
.body h1 { font-size: 16px; line-height: 24px; font-weight: 400; color: #003399; }
.body label { margin-top: 16px; line-height: 18px; }
.pick { display: flex; align-items: center; gap: 8px; width: 100%; margin-top: 40px; }
.combo { flex: 1; display: flex; align-items: center; justify-content: space-between; height: 26px; padding: 0 3px 0 3px; border: 1px solid #0078d7; }
.combo input { width: 54px; height: 18px; background: #0078d7; color: #fff; }
.pick .btn { width: 85px; height: 24px; }
.list { width: 100%; height: 187px; margin: 8px 0 7px; border: 1px solid #828790; padding: 0 1px; }
.list table { width: 100%; height: 185px; }
.list th, .list td { border-right: 1px solid #e2edf9; padding: 0 0 0 6px; height: 21px; }
.list th { height: 25px; }
.list th:first-child { width: 357px; }
.list td:first-child { padding-left: 5px; }
.list td .i16 { display: inline-block; vertical-align: top; margin-right: 1px; }
.list .rest td { height: auto; }
.level { gap: 9px; }
.body > a { line-height: 18px; }
.share-dialog footer { display: flex; justify-content: flex-end; gap: 9px; padding: 8px 11px 9px; border: 1px solid #fff; border-top-color: #dfdfdf; background: #f0f0f0; }
.share-dialog footer .btn { width: 75px; height: 22px; }
.m-user { left: 25px; top: 164px; width: 108px; height: 53px; }
.m-drop { left: 426px; top: 165px; width: 45px; height: 53px; }
.m-add { left: 489px; top: 156px; width: 81px; height: 69px; }
.m-ok { left: 427px; top: 434px; width: 86px; height: 68px; }

.watermark { position: absolute; right: 14px; bottom: 8px; font: 17px/20px "Liberation Sans", Arial, sans-serif; color: rgba(110, 110, 110, .75); }
```
